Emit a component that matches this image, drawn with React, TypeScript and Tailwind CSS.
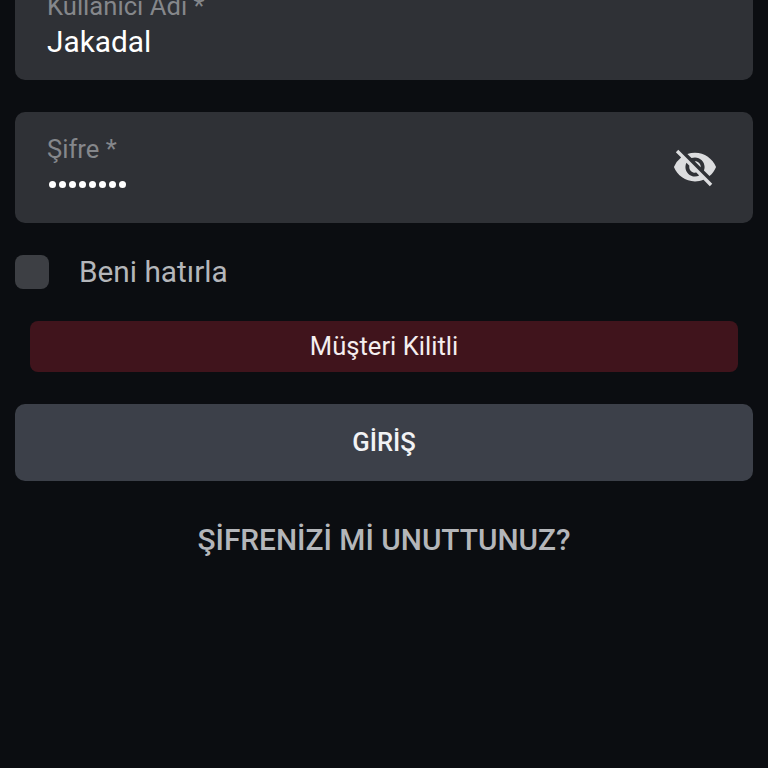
import { MdVisibilityOff } from "react-icons/md";

function Field({ label, children }: { label: string; children: React.ReactNode }) {
  return (
    <div className="relative h-[111px] rounded-[10px] bg-[#2f3136] px-8 pt-[20px]">
      <p className="text-[25.6px] leading-[34px] text-[#85878b]">{label}</p>
      {children}
    </div>
  );
}

export default function App() {
  return (
    <div className="h-[768px] w-[768px] overflow-hidden bg-[#0b0d11] font-['Roboto',sans-serif]">
      <div className="mt-[-31px] flex flex-col px-[15px]">
        <Field label="Kullanıcı Adı *">
          <p className="mt-[1px] text-[29.8px] leading-[36px] text-white">Jakadal</p>
        </Field>

        <div className="mt-[32px]">
          <Field label="Şifre *">
            <div className="ml-[2px] mt-[15px] flex gap-[3px]">
              {[0, 1, 2, 3, 4, 5, 6, 7].map((i) => (
                <span key={i} className="h-[7px] w-[7px] rounded-full bg-white" />
              ))}
            </div>
            <MdVisibilityOff className="absolute right-[35px] top-[32px] h-[46px] w-[46px] text-[#dcdddf]" />
          </Field>
        </div>

        <div className="mt-[32px] flex items-center">
          <div className="h-[34px] w-[34px] rounded-[8px] bg-[#3d3f44]" />
          <span className="ml-[30px] text-[29.8px] leading-[34px] text-[#b4b6ba]">Beni hatırla</span>
        </div>

        <div className="mx-[15px] mt-[32px] flex h-[51px] items-center justify-center rounded-[8px] bg-[#40141c] text-[25.6px] text-[#f5eeef]">
          Müşteri Kilitli
        </div>

        <button className="mt-[32px] flex h-[77px] items-center justify-center rounded-[10px] bg-[#3c4049] text-[25.6px] font-medium text-[#f2f3f5]">
          GİRİŞ
        </button>

        <p className="mt-[40px] text-center text-[29.8px] font-medium leading-[38px] text-[#b4b6ba]">
          ŞİFRENİZİ Mİ UNUTTUNUZ?
        </p>
      </div>
    </div>
  );
}
